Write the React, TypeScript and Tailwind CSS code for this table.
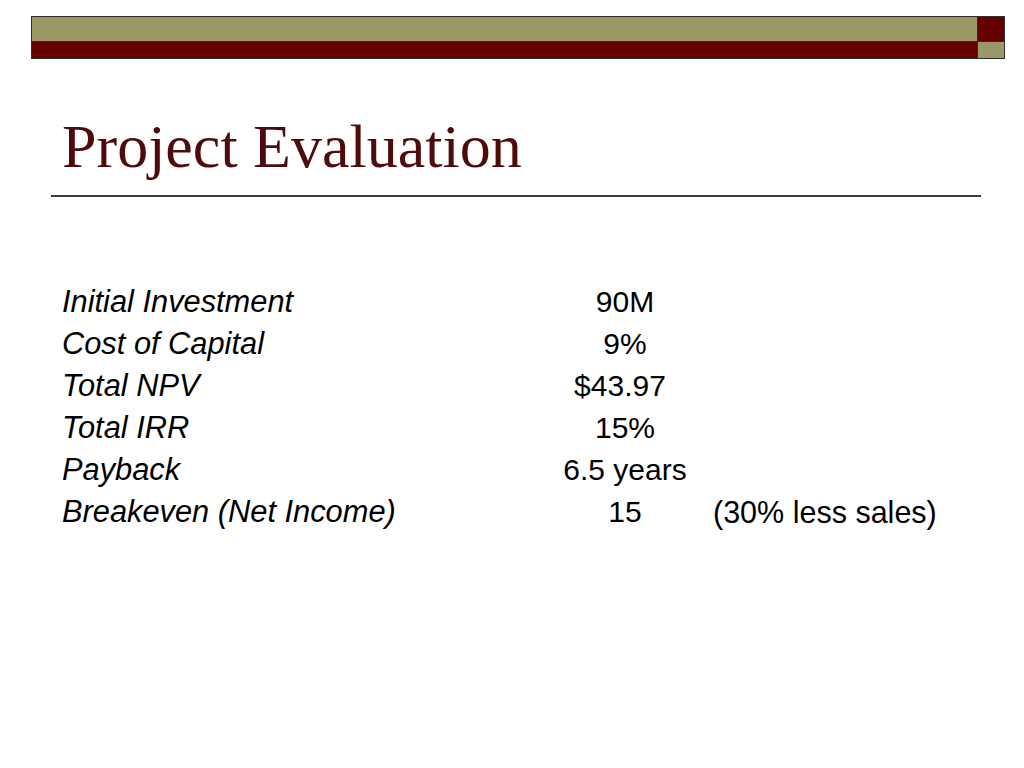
const rows: { label: string; value: string; note?: string; shift?: boolean }[] = [
  { label: 'Initial Investment', value: '90M' },
  { label: 'Cost of Capital', value: '9%' },
  { label: 'Total NPV', value: '$43.97', shift: true },
  { label: 'Total IRR', value: '15%' },
  { label: 'Payback', value: '6.5 years' },
  { label: 'Breakeven (Net Income)', value: '15', note: '(30% less sales)' },
]

export default function App() {
  return (
    <main className="w-[1024px] h-[768px] bg-white overflow-hidden">
      {/* top banner */}
      <div className="pt-[16px] pl-[31px]">
        <div className="w-[974px] h-[43px] border border-[#2e2e2e] grid grid-cols-[1fr_26px] grid-rows-[25px_16px]">
          <div className="bg-[#999966] border-r border-b border-[#2e2e2e]" />
          <div className="bg-[#660000] border-b border-[#2e2e2e]" />
          <div className="bg-[#660000] border-r border-[#2e2e2e]" />
          <div className="bg-[#999966]" />
        </div>
      </div>

      <h1
        className="mt-[56px] ml-[62px] text-[62px] leading-[62px] text-[#4f0b0b]"
        style={{ fontFamily: '"Liberation Serif", "Times New Roman", serif' }}
      >
        Project Evaluation
      </h1>

      <div className="mt-[18px] ml-[51px] w-[930px] h-[2px] bg-[#3a3a3a]" />

      <div
        className="mt-[84px] pl-[62px] grid grid-cols-[500px_126px_auto] text-[30px] leading-[42px] text-black"
        style={{ fontFamily: '"Liberation Sans", Arial, sans-serif' }}
      >
        {rows.map((r) => (
          <div key={r.label} className="contents">
            <span className="italic text-[30.8px]">{r.label}</span>
            <span className={r.shift ? 'text-center pr-[10px]' : 'text-center'}>{r.value}</span>
            <span className="pl-[25px] text-[30.5px]">{r.note ?? ''}</span>
          </div>
        ))}
      </div>
    </main>
  )
}
